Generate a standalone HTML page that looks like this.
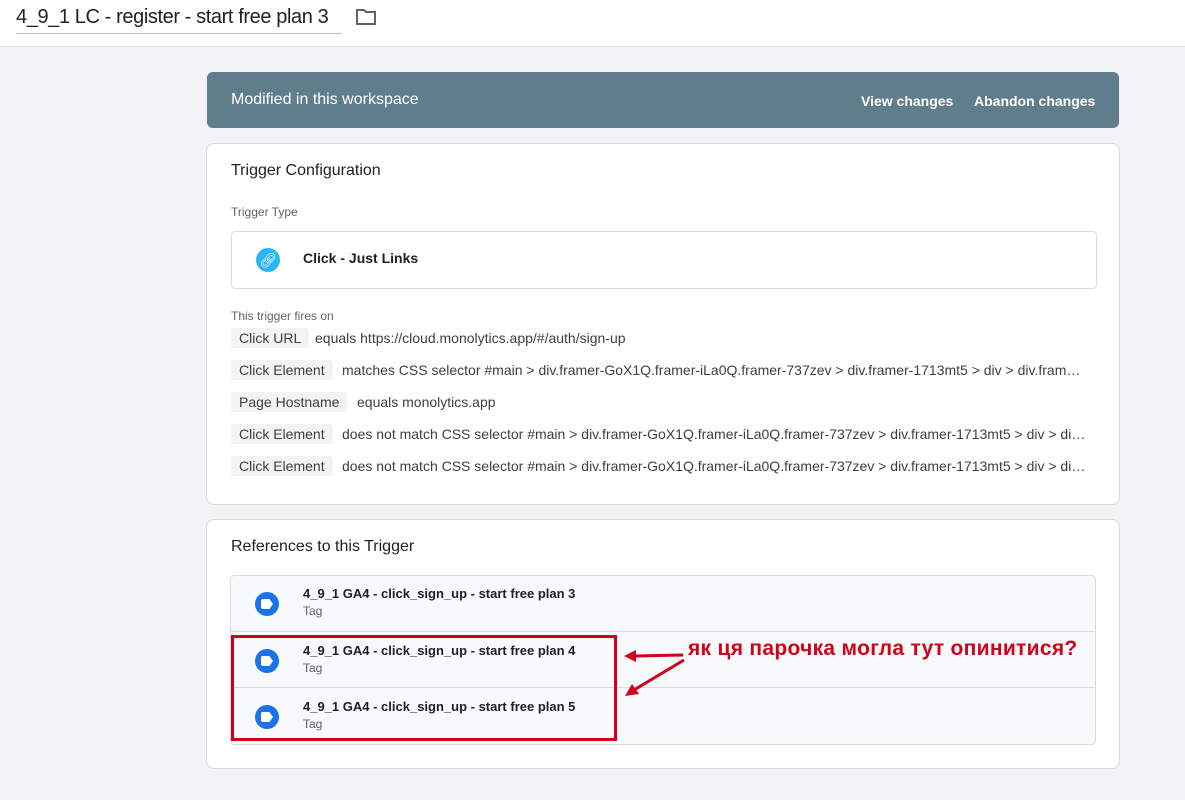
<!DOCTYPE html>
<html><head><style>
*{box-sizing:border-box;margin:0;padding:0}
body{width:1185px;height:800px;overflow:hidden;background:#f1f3f4;font-family:"Liberation Sans",sans-serif;color:#202124;position:relative}
.top{position:absolute;left:0;top:0;width:1185px;height:47px;background:#fff;border-bottom:1px solid #dadce0}
.title{position:absolute;left:16px;top:6px;font-size:20px;letter-spacing:-0.4px;white-space:nowrap;color:#202124;border-bottom:1px solid #bdc1c6;padding-bottom:4px;width:326px;height:28px}
.banner{position:absolute;left:207px;top:72px;width:912px;height:56px;background:#607d8b;border-radius:6px;color:#fff}
.card{position:absolute;left:206px;width:914px;background:#fff;border:1px solid #dadce0;border-radius:8px}
.chip{position:absolute;left:231px;height:20px;background:#f1f3f4;font-size:14px;color:#3c4043;padding:2px 8px;border-radius:3px}
.cond{position:absolute;font-size:14px;color:#3c4043;white-space:nowrap}
.row{position:absolute;left:0;width:866px;height:56px;border-top:1px solid #dadce0}
.ic{position:absolute;left:24px;top:17px;width:24px;height:24px;border-radius:50%;background:#1a73e8}
.ic:after{content:"";position:absolute;left:6px;top:7px;width:12px;height:10px;background:#fff;border-radius:2px 0 0 2px;clip-path:polygon(0 0,70% 0,100% 50%,70% 100%,0 100%)}
.nm{position:absolute;left:72px;top:11px;font-size:13px;font-weight:bold;color:#202124}
.tg{position:absolute;left:72px;top:29px;font-size:12px;color:#5f6368}
</style></head><body>
<div class="top"><div class="title">4_9_1 LC - register - start free plan 3</div>
<svg style="position:absolute;left:355px;top:8px" width="22" height="18" viewBox="0 0 22 18"><path d="M2 2h7l2 2h9v12H2z" fill="none" stroke="#5f6368" stroke-width="2"/></svg></div>
<div class="banner"><span style="position:absolute;left:24px;top:19px;font-size:16px">Modified in this workspace</span>
<span style="position:absolute;left:654px;top:21px;font-size:14px;font-weight:bold">View changes</span>
<span style="position:absolute;left:767px;top:21px;font-size:14px;font-weight:bold">Abandon changes</span></div>
<div class="card" style="top:143px;height:362px">
<div style="position:absolute;left:24px;top:18px;font-size:16px">Trigger Configuration</div>
<div style="position:absolute;left:24px;top:61px;font-size:12px;color:#5f6368">Trigger Type</div>
<div style="position:absolute;left:24px;top:87px;width:866px;height:58px;border:1px solid #dadce0;border-radius:4px">
<div style="position:absolute;left:24px;top:16px;width:24px;height:24px;border-radius:50%;background:#29b6f6;color:#fff;font-size:14px;text-align:center;line-height:24px">🔗︎</div>
<div style="position:absolute;left:71px;top:18px;font-size:14px;font-weight:bold">Click - Just Links</div></div>
<div style="position:absolute;left:24px;top:165px;font-size:12px;color:#5f6368">This trigger fires on</div>
</div>
<div class="chip" style="top:328px">Click URL</div><div class="cond" style="left:315px;top:330px">equals https://cloud.monolytics.app/#/auth/sign-up</div>
<div class="chip" style="top:360px">Click Element</div><div class="cond" style="left:342px;top:362px">matches CSS selector #main &gt; div.framer-GoX1Q.framer-iLa0Q.framer-737zev &gt; div.framer-1713mt5 &gt; div &gt; div.fram…</div>
<div class="chip" style="top:392px">Page Hostname</div><div class="cond" style="left:357px;top:394px">equals monolytics.app</div>
<div class="chip" style="top:424px">Click Element</div><div class="cond" style="left:342px;top:426px">does not match CSS selector #main &gt; div.framer-GoX1Q.framer-iLa0Q.framer-737zev &gt; div.framer-1713mt5 &gt; div &gt; di…</div>
<div class="chip" style="top:456px">Click Element</div><div class="cond" style="left:342px;top:458px">does not match CSS selector #main &gt; div.framer-GoX1Q.framer-iLa0Q.framer-737zev &gt; div.framer-1713mt5 &gt; div &gt; di…</div>
<div class="card" style="top:519px;height:250px">
<div style="position:absolute;left:24px;top:18px;font-size:16px">References to this Trigger</div>
<div style="position:absolute;left:23px;top:55px;width:866px;height:170px;border:1px solid #dadce0;border-radius:4px;background:#f8f9fa;overflow:hidden">
<div class="row" style="top:-1px;border-top:none"><div class="ic"></div><div class="nm">4_9_1 GA4 - click_sign_up - start free plan 3</div><div class="tg">Tag</div></div>
<div class="row" style="top:55px"><div class="ic"></div><div class="nm">4_9_1 GA4 - click_sign_up - start free plan 4</div><div class="tg">Tag</div></div>
<div class="row" style="top:111px"><div class="ic"></div><div class="nm">4_9_1 GA4 - click_sign_up - start free plan 5</div><div class="tg">Tag</div></div>
</div></div>
<div style="position:absolute;left:231px;top:635px;width:386px;height:106px;border:3px solid #d0021b"></div>
<svg style="position:absolute;left:0;top:0" width="1185" height="800"><g stroke="#d0021b" stroke-width="3" fill="#d0021b">
<line x1="683" y1="655" x2="632" y2="656"/><polygon points="624,656 636,650 636,662" stroke="none"/>
<line x1="684" y1="660" x2="634" y2="690"/><polygon points="625,696 632,684 639,694" stroke="none"/></g></svg>
<div style="position:absolute;left:688px;top:637px;font-size:21px;letter-spacing:0.3px;font-weight:bold;color:#d0021b;white-space:nowrap">як ця парочка могла тут опинитися?</div>
</body></html>
